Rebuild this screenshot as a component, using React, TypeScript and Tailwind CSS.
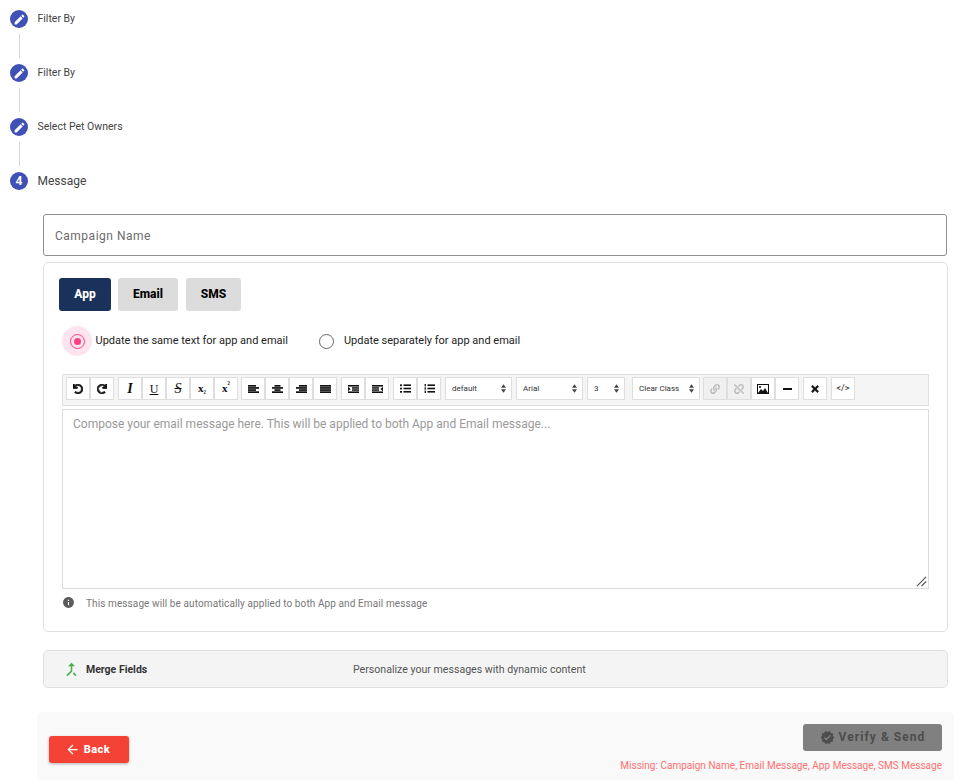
import React from 'react';
import { FaUndo, FaRedo, FaLink, FaUnlink, FaTimes } from 'react-icons/fa';

const PENCIL = "M3 17.25V21h3.75L17.81 9.94l-3.75-3.75L3 17.25zM20.71 7.04c.39-.39.39-1.02 0-1.41l-2.34-2.34c-.39-.39-1.02-.39-1.41 0l-1.83 1.83 3.75 3.75 1.83-1.83z";

const Step = ({ label, num, last }: { label: string; num?: number; last?: boolean }) => (
  <div className="flex flex-col">
    <div className="flex items-center h-[18px]">
      <div className="w-[18px] h-[18px] rounded-full bg-[#3f51b5] flex items-center justify-center text-white text-[12px] font-bold">
        {num ?? (
          <svg viewBox="0 0 24 24" className="w-[13px] h-[13px] fill-white"><path d={PENCIL} /></svg>
        )}
      </div>
      <span className={`ml-[9.5px] text-[#444] ${num ? 'text-[12px]' : 'text-[10.5px]'}`}>{label}</span>
    </div>
    {!last && <div className="ml-[8.5px] mt-[6px] mb-[6px] w-px h-[24px] bg-[#d9d9d9]" />}
  </div>
);

const Btn = ({ children, disabled, className }: { children: React.ReactNode; disabled?: boolean; className?: string }) => (
  <div className={`h-[23px] flex items-center justify-center border border-[#dedede] ${disabled ? 'bg-[#f0f0f0] text-[#bdbdbd]' : 'bg-white text-[#111]'} ${className ?? 'w-[24px]'}`}>
    {children}
  </div>
);

const Lines = ({ rows }: { rows: [number, number][] }) => (
  <svg viewBox="0 0 11 8" className="w-[11px] h-[8px] fill-[#111]">
    {rows.map(([x, w], i) => <rect key={i} x={x} y={i * 2.1} width={w} height="1.7" />)}
  </svg>
);

const Indent = ({ flip }: { flip?: boolean }) => (
  <svg viewBox="0 0 11 8" className="w-[11px] h-[8px] fill-[#111]">
    <rect x="0" y="0" width="11" height="1.6" />
    <rect x="0" y="6.4" width="11" height="1.6" />
    <rect x={flip ? 0 : 4} y="2.2" width="7" height="1.5" />
    <rect x={flip ? 0 : 4} y="4.3" width="7" height="1.5" />
    <path d={flip ? "M11 1.8v4.4l-2.6-2.2z" : "M0 1.8v4.4l2.6-2.2z"} />
  </svg>
);

const BulletList = ({ numbered }: { numbered?: boolean }) => (
  <svg viewBox="0 0 11 9" className="w-[11px] h-[9px] fill-[#111]">
    {[0.4, 3.7, 7].map((y) => (
      <g key={y}>
        <rect x={numbered ? 0.6 : 0} y={y - (numbered ? 0.4 : 0)} width={numbered ? 1.3 : 2} height={numbered ? 2.4 : 1.7} />
        <rect x="3.5" y={y} width="7.5" height="1.6" />
      </g>
    ))}
  </svg>
);

const Select = ({ label, className }: { label: string; className: string }) => (
  <div className={`h-[23px] flex items-center justify-between bg-white border border-[#dedede] pl-[6px] pr-[5px] text-[8px] text-[#333] ${className}`}>
    <span>{label}</span>
    <svg viewBox="0 0 6 10" className="w-[5px] h-[9px] fill-[#444]"><path d="M3 0l3 4H0zM3 10L0 6h6z" /></svg>
  </div>
);

const Group = ({ children, className }: { children: React.ReactNode; className?: string }) => (
  <div className={`flex ${className ?? ''}`}>{children}</div>
);

export default function App() {
  return (
    <div className="relative w-[968px] h-[780px] overflow-hidden bg-white font-['Roboto',sans-serif]">
      <div className="pt-[10px] pl-[10px]">
        <Step label="Filter By" />
        <Step label="Filter By" />
        <Step label="Select Pet Owners" />
        <Step label="Message" num={4} last />
      </div>

      <div className="ml-[43px] mr-[21px] mt-[24px]">
        <div className="h-[42px] border border-[#8f8f8f] rounded-[3px] flex items-center pl-[11px] pt-[1px] text-[12px] tracking-[0.5px] text-[#6b6b6b]">
          Campaign Name
        </div>

        <div className="mt-[6px] w-[905px] h-[370px] border border-[#e0e0e0] rounded-[5px] pt-[15px] pl-[15px]">
          <div className="flex">
            <div className="w-[52px] h-[33px] pb-[1px] rounded-[3px] bg-[#1a315c] text-white text-[12px] font-extrabold flex items-center justify-center">App</div>
            <div className="ml-[7px] w-[60px] h-[33px] pb-[1px] rounded-[3px] bg-[#dcdcdc] text-black text-[12px] font-extrabold flex items-center justify-center">Email</div>
            <div className="ml-[8px] w-[55px] h-[33px] pb-[1px] rounded-[3px] bg-[#dcdcdc] text-black text-[12px] font-extrabold flex items-center justify-center">SMS</div>
          </div>

          <div className="flex items-center mt-[15px] ml-[3px] h-[30px]">
            <div className="w-[30px] h-[30px] rounded-full bg-[#fde4ee] flex items-center justify-center">
              <div className="w-[15px] h-[15px] rounded-full border-[1.5px] border-[#ff4081] flex items-center justify-center">
                <div className="w-[7px] h-[7px] rounded-full bg-[#ff4081]" />
              </div>
            </div>
            <span className="ml-[3.5px] text-[11px] text-[#222]">Update the same text for app and email</span>
            <div className="ml-[31px] w-[15px] h-[15px] rounded-full border-[1.5px] border-[#666] mt-[1px]" />
            <span className="ml-[10px] text-[11px] text-[#222]">Update separately for app and email</span>
          </div>

          <div className="ml-[3px] mt-[18px] w-[867px] h-[32px] bg-[#f5f5f5] border border-[#e0e0e0] flex items-start pl-[3px] pt-[2px] gap-[3px]">
            <Group>
              <Btn><FaUndo className="w-[10px] h-[10px] stroke-current stroke-[40]" /></Btn>
              <Btn><FaRedo className="w-[10px] h-[10px] stroke-current stroke-[40]" /></Btn>
            </Group>
            <Group className="ml-[1px]">
              <Btn><span className="font-['Liberation_Serif',serif] italic font-bold text-[14px]">I</span></Btn>
              <Btn><span className="font-['Liberation_Serif',serif] underline text-[12px]">U</span></Btn>
              <Btn><span className="font-['Liberation_Serif',serif] line-through italic text-[14px]">S</span></Btn>
              <Btn><span className="font-['Liberation_Serif',serif] font-bold text-[11px]">x<span className="text-[8px]">₂</span></span></Btn>
              <Btn><span className="font-['Liberation_Serif',serif] font-bold text-[11px]">x<span className="text-[8px] align-top leading-[10px]">²</span></span></Btn>
            </Group>
            <Group>
              <Btn><Lines rows={[[0, 8], [0, 11], [0, 8], [0, 11]]} /></Btn>
              <Btn><Lines rows={[[2.5, 6], [0, 11], [2.5, 6], [0, 11]]} /></Btn>
              <Btn><Lines rows={[[3, 8], [0, 11], [3, 8], [0, 11]]} /></Btn>
              <Btn><Lines rows={[[0, 11], [0, 11], [0, 11], [0, 11]]} /></Btn>
            </Group>
            <Group className="ml-[1px]">
              <Btn><Indent /></Btn>
              <Btn><Indent flip /></Btn>
            </Group>
            <Group className="ml-[1px]">
              <Btn><BulletList /></Btn>
              <Btn><BulletList numbered /></Btn>
            </Group>
            <Select label="default" className="w-[67px] ml-[1px]" />
            <Select label="Arial" className="w-[67px] ml-[1px]" />
            <Select label="3" className="w-[38px] ml-[1px]" />
            <Select label="Clear Class" className="w-[68px] ml-[4px]" />
            <Group>
              <Btn disabled><FaLink className="w-[10px] h-[10px]" /></Btn>
              <Btn disabled><FaUnlink className="w-[10px] h-[10px]" /></Btn>
              <Btn>
                <svg viewBox="0 0 12 10" className="w-[12px] h-[10px]">
                  <rect x="0.5" y="0.5" width="11" height="9" fill="white" stroke="#111" />
                  <path d="M1 9l3-4 2 2 2-3 3 5z" fill="#111" />
                  <circle cx="3" cy="3" r="1" fill="#111" />
                </svg>
              </Btn>
              <Btn><div className="w-[9px] h-[2px] bg-[#111]" /></Btn>
            </Group>
            <Group className="ml-[1px]">
              <Btn><FaTimes className="w-[10px] h-[10px] stroke-current stroke-[30]" /></Btn>
            </Group>
            <Group className="ml-[1px]">
              <Btn><span className="text-[9px] text-[#222]">&lt;/&gt;</span></Btn>
            </Group>
          </div>

          <div className="relative ml-[3px] mt-[3px] w-[867px] h-[180px] border border-[#dcdcdc] pt-[5px] pl-[10px] text-[12px] text-[#9a9a9a]">
            Compose your email message here. This will be applied to both App and Email message...
            <svg viewBox="0 0 12 12" className="absolute right-[1px] bottom-[1px] w-[11px] h-[11px] stroke-[#555] stroke-[1.3]">
              <path d="M1 11L11 1M6 11l5-5" />
            </svg>
          </div>

          <div className="flex items-center ml-[3px] mt-[8px]">
            <svg viewBox="0 0 24 24" className="w-[13px] h-[13px] fill-[#5c5c5c] -mt-[4px]">
              <path d="M12 2C6.48 2 2 6.48 2 12s4.48 10 10 10 10-4.48 10-10S17.52 2 12 2zm1 15h-2v-6h2v6zm0-8h-2V7h2v2z" />
            </svg>
            <span className="ml-[11px] text-[10px] tracking-[0.1px] text-[#777] -mt-[1px]">This message will be automatically applied to both App and Email message</span>
          </div>
        </div>

        <div className="mt-[18px] w-[905px] h-[38px] bg-[#f4f4f4] border border-[#e0e0e0] rounded-[5px] flex items-center pl-[18px]">
          <svg viewBox="0 0 24 24" className="w-[19px] h-[19px] fill-[#4caf50]">
            <path d="M17 20.41L18.41 19 15 15.59 13.59 17 17 20.41zM7.5 8H11v5.59L5.59 19 7 20.41l6-6V8h3.5L12 3.5 7.5 8z" />
          </svg>
          <span className="ml-[5px] w-[267px] pt-[1px] text-[10.5px] font-bold text-[#333]">Merge Fields</span>
          <span className="pt-[1px] text-[10.6px] text-[#555]">Personalize your messages with dynamic content</span>
        </div>
      </div>

      <div className="ml-[37px] mt-[24px] w-[917px] h-[68px] bg-[#f9f9f9] rounded-t-[5px] flex justify-between pl-[12px] pr-[12px] pt-[12px]">
        <div className="mt-[12px] w-[80px] h-[27px] pt-[1px] bg-[#f44336] rounded-[3px] shadow-[0_1px_3px_rgba(0,0,0,0.3)] flex items-center justify-center text-white text-[11px] font-extrabold tracking-[0.5px]">
          <svg viewBox="0 0 24 24" className="w-[15px] h-[15px] fill-white mr-[4px] -ml-[3px] -mt-[1px]">
            <path d="M20 11H7.83l5.59-5.59L12 4l-8 8 8 8 1.41-1.41L7.83 13H20v-2z" />
          </svg>
          Back
        </div>
        <div className="flex flex-col items-end">
          <div className="w-[139px] h-[27px] pb-[1px] bg-[#808080] rounded-[3px] flex items-center justify-center text-[#4d4d4d] text-[12px] font-bold tracking-[1.05px]">
            <svg viewBox="0 0 24 24" className="w-[15px] h-[15px] fill-[#4d4d4d] mr-[4px]">
              <path d="M23 12l-2.44-2.78.34-3.68-3.61-.82-1.89-3.18L12 3 8.6 1.54 6.71 4.72l-3.61.81.34 3.68L1 12l2.44 2.78-.34 3.69 3.61.82 1.89 3.18L12 21l3.4 1.46 1.89-3.18 3.61-.82-.34-3.68L23 12zm-12.91 4.72l-3.8-3.81 1.48-1.48 2.32 2.33 5.85-5.87 1.48 1.48-7.33 7.35z" />
            </svg>
            Verify &amp; Send
          </div>
          <div className="mt-[7px] text-[10px] text-[#ff7070] tracking-[0.02px]">Missing: Campaign Name, Email Message, App Message, SMS Message</div>
        </div>
      </div>
    </div>
  );
}
